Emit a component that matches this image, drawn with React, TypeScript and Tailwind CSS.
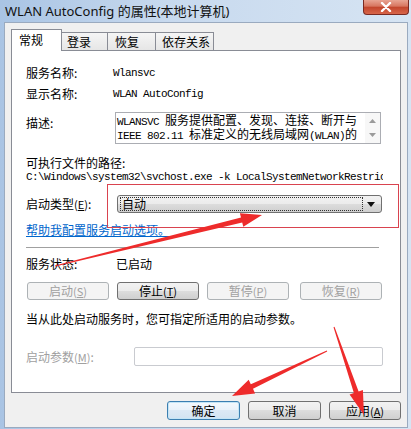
import type { ReactNode } from 'react';

const cjk = "font-['Noto_Sans_CJK_SC',sans-serif]";
const mono = "font-['Liberation_Mono','Noto_Sans_CJK_SC',monospace] text-[11px] tracking-[-0.6px]";

function arrow(x1: number, y1: number, x2: number, y2: number, tailW: number, shaftW: number, headLen: number, headW: number) {
  const dx = x2 - x1;
  const dy = y2 - y1;
  const len = Math.hypot(dx, dy);
  const ux = dx / len;
  const uy = dy / len;
  const nx = -uy;
  const ny = ux;
  const bx = x2 - ux * headLen;
  const by = y2 - uy * headLen;
  const pts = [
    [x1 + (nx * tailW) / 2, y1 + (ny * tailW) / 2],
    [bx + (nx * shaftW) / 2, by + (ny * shaftW) / 2],
    [bx + (nx * headW) / 2, by + (ny * headW) / 2],
    [x2, y2],
    [bx - (nx * headW) / 2, by - (ny * headW) / 2],
    [bx - (nx * shaftW) / 2, by - (ny * shaftW) / 2],
    [x1 - (nx * tailW) / 2, y1 - (ny * tailW) / 2],
  ];
  return pts.map((p) => p.map((v) => v.toFixed(1)).join(',')).join(' ');
}

function Btn({ children, disabled, primary, className = '' }: { children: ReactNode; disabled?: boolean; primary?: boolean; className?: string }) {
  const look = disabled
    ? 'border-[#adb2b5] bg-[#f4f4f4] text-[#a0a0a0]'
    : primary
      ? 'border-[#3c7fb1] bg-[linear-gradient(#f4f9fd,#e9f2fa_50%,#dce9f5_50%,#d2e3f2)] text-black shadow-[inset_0_0_0_1px_#c4e5f6]'
      : 'border-[#707070] bg-[linear-gradient(#f2f2f2,#ebebeb_50%,#dddddd_50%,#cfcfcf)] text-black';
  return (
    <div className={`flex items-center justify-center rounded-[3px] border text-[12px] leading-[14px] ${look} ${className}`}>
      {children}
    </div>
  );
}

function Key({ k }: { k: string }) {
  return (
    <span className="text-[11px]">
      (<span className="underline">{k}</span>)
    </span>
  );
}

export default function App() {
  return (
    <div className={`relative w-[411px] h-[429px] overflow-hidden flex flex-col bg-[linear-gradient(90deg,#a9c4e4,#c7d9ee_40%,#d6e4f3)] ${cjk}`}>
      {/* title bar */}
      <div className="h-[22px] flex items-start shrink-0">
        <div className="pl-[5px] pt-[2px] text-[13px] leading-[18px] text-[#111] font-['Noto_Sans','Noto_Sans_CJK_SC',sans-serif]">
          WLAN AutoConfig 的属性(本地计算机)
        </div>
        <div className="ml-auto mr-[2px] w-[46px] h-[15px] rounded-b-[4px] border border-t-0 border-[#7a2a22] bg-[linear-gradient(#e8a493,#d7755f_45%,#c2452c_50%,#d7654a)] flex items-center justify-center">
          <svg width="12" height="10" viewBox="0 0 12 10">
            <path d="M2 1 L10 9 M10 1 L2 9" stroke="#fff" strokeWidth="2.4" strokeLinecap="round" />
          </svg>
        </div>
      </div>

      {/* client area */}
      <div className="flex-1 ml-[4px] mr-[3px] mb-[1px] bg-[#f0f0f0] border border-[#9aaabf] pl-[6px] pt-[6px] flex flex-col">
        {/* tabs */}
        <div className="flex items-end h-[21px]">
          <div className="relative z-10 w-[51px] h-[22px] -mb-[1px] bg-white border border-b-0 border-[#898c95] pl-[7px] text-[12px] leading-[20px]">
            常规
          </div>
          <div className="w-[46px] h-[18px] border-t border-r border-[#898c95] bg-[linear-gradient(#f5f5f5,#e6e6e6)] pl-[5px] text-[12px] leading-[18px]">
            登录
          </div>
          <div className="w-[48px] h-[18px] border-t border-r border-[#898c95] bg-[linear-gradient(#f5f5f5,#e6e6e6)] pl-[7px] text-[12px] leading-[18px]">
            恢复
          </div>
          <div className="w-[58px] h-[18px] border-t border-r border-[#898c95] bg-[linear-gradient(#f5f5f5,#e6e6e6)] pl-[6px] text-[12px] leading-[18px]">
            依存关系
          </div>
        </div>

        {/* panel */}
        <div className="w-[390px] h-[343px] bg-white border border-[#898c95] pl-[14px] flex flex-col text-[12px] leading-[14px] text-black">
          <div className="mt-[15px] h-[14px] flex items-center">
            <div className="w-[87px]">服务名称:</div>
            <div className={mono}>Wlansvc</div>
          </div>
          <div className="mt-[7px] h-[14px] flex items-center">
            <div className="w-[87px]">显示名称:</div>
            <div className={mono}>WLAN AutoConfig</div>
          </div>
          <div className="mt-[11px] h-[32px] flex items-start">
            <div className="w-[89px] mt-[4px]">描述:</div>
            <div className="w-[266px] h-[32px] border border-[#abadb3] flex">
              <div className="flex-1 pl-[1px] pt-[1px] leading-[12px] whitespace-nowrap overflow-hidden">
                <div>
                  <span className={mono}>WLANSVC </span>服务提供配置、发现、连接、断开与
                </div>
                <div>
                  <span className={mono}>IEEE 802.11 </span>标准定义的无线局域网<span className={mono}>(WLAN)</span>的
                </div>
              </div>
              <div className="w-[15px] bg-[#f7f7f7] flex flex-col items-center justify-between py-[6px]">
                <svg width="7" height="4" viewBox="0 0 7 4"><path d="M0 4 L3.5 0 L7 4 Z" fill="#9a9a9a" /></svg>
                <svg width="7" height="4" viewBox="0 0 7 4"><path d="M0 0 L3.5 4 L7 0 Z" fill="#9a9a9a" /></svg>
              </div>
            </div>
          </div>
          <div className="mt-[12px] h-[14px] flex items-center">可执行文件的路径:</div>
          <div className={`h-[14px] w-[357px] whitespace-nowrap overflow-hidden leading-[14px] ${mono}`}>
            {'C:\\Windows\\system32\\svchost.exe -k LocalSystemNetworkRestricted'}
          </div>
          <div className="mt-[11px] h-[18px] flex items-center">
            <div className="w-[91px]">
              启动类型<Key k="E" />:
            </div>
            <div className="w-[265px] h-[18px] rounded-[3px] border border-[#707070] bg-[linear-gradient(#f2f2f2,#ebebeb_50%,#dddddd_50%,#cfcfcf)] flex items-center pl-[2px] pr-[6px]">
              <div className="w-[243px] h-[14px] border border-dotted border-[#333] pl-[1px] leading-[12px]">自动</div>
              <svg className="ml-auto" width="8" height="5" viewBox="0 0 8 5"><path d="M0 0 L8 0 L4 5 Z" fill="#111" /></svg>
            </div>
          </div>
          <div className="mt-[10px] h-[14px] flex items-center text-[#0066cc] underline">帮助我配置服务启动选项。</div>
          <div className="mt-[10px] w-[353px] border-t border-[#a0a0a0] border-b border-b-white" />
          <div className="mt-[8px] h-[14px] flex items-center">
            <div className="w-[90px]">服务状态:</div>
            <div>已启动</div>
          </div>
          <div className="mt-[11px] h-[18px] flex pl-[1px]">
            <Btn disabled className="w-[82px]">启动<Key k="S" /></Btn>
            <Btn className="w-[82px] ml-[8px]">停止<Key k="T" /></Btn>
            <Btn disabled className="w-[82px] ml-[8px]">暂停<Key k="P" /></Btn>
            <Btn disabled className="w-[82px] ml-[11px]">恢复<Key k="R" /></Btn>
          </div>
          <div className="mt-[12px] h-[14px] flex items-center">当从此处启动服务时，您可指定所适用的启动参数。</div>
          <div className="mt-[21px] h-[19px] flex items-center">
            <div className="w-[108px] text-[#a0a0a0]">
              启动参数<Key k="M" />:
            </div>
            <div className="w-[249px] h-[19px] rounded-[2px] border border-[#c9cbd0] bg-white" />
          </div>
        </div>

        {/* dialog buttons */}
        <div className="mt-[8px] flex pl-[156px]">
          <Btn primary className="w-[73px] h-[19px]">确定</Btn>
          <Btn className="w-[73px] h-[19px] ml-[8px]">取消</Btn>
          <Btn className="w-[72px] h-[19px] ml-[8px]">应用<Key k="A" /></Btn>
        </div>
      </div>

      {/* annotations */}
      <svg className="absolute inset-0 pointer-events-none" width="411" height="429" viewBox="0 0 411 429">
        <rect x="107.5" y="184.5" width="291" height="43" fill="none" stroke="#d9434f" strokeWidth="1" />
        <polygon points={arrow(55, 266, 262, 215, 1, 5, 21, 14)} fill="#ee2b2b" />
        <polygon points={arrow(327, 351, 232, 396, 1, 5, 22, 15)} fill="#ee2b2b" />
        <polygon points={arrow(334, 327, 364, 415, 1, 5, 24, 14)} fill="#ee2b2b" />
      </svg>
    </div>
  );
}
